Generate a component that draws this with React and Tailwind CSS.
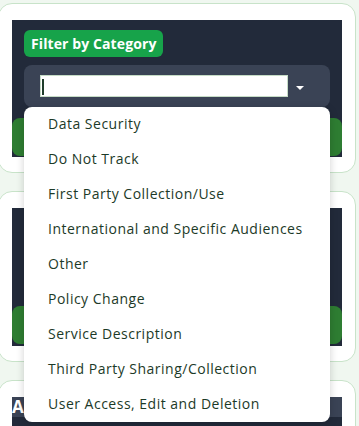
const categories = [
  "Data Security",
  "Do Not Track",
  "First Party Collection/Use",
  "International and Specific Audiences",
  "Other",
  "Policy Change",
  "Service Description",
  "Third Party Sharing/Collection",
  "User Access, Edit and Deletion",
];

function CategorySelect({ open }) {
  return (
    <div className="relative mx-3 h-[42px] rounded-lg bg-[#3a4355] pl-4 pr-[26px] pt-[10px] flex items-start">
      <div className="relative h-[22px] w-[248px] border border-[#c6dcc6] bg-white">
        {open && <span className="absolute left-[1px] top-[3px] h-[16px] w-[2px] bg-[#1f3d2b]" />}
      </div>
      <div className="ml-auto mt-[11px] h-0 w-0 border-x-[4px] border-t-[4px] border-x-transparent border-t-white" />
      {open && (
        <ul className="absolute left-0 top-full z-10 w-full rounded-lg bg-white shadow-[0_2px_8px_rgba(0,0,0,0.18)]">
          {categories.map((c) => (
            <li key={c} className="flex h-[35px] items-center pl-6 pb-[2px] text-[14px] tracking-[0.5px] text-[#1c3a28]">
              {c}
            </li>
          ))}
        </ul>
      )}
    </div>
  );
}

function FilterCard({ open, bottom }) {
  return (
    <div className="rounded-[14px] border border-[#c8e3c9] bg-white px-[13px] pt-4 pb-[15px]">
      <div className="bg-[#222a3a] pt-[10px]" style={{ paddingBottom: bottom }}>
        <div className="ml-3 inline-flex h-[27px] items-center rounded-md bg-[#17a34a] px-[7px] text-[14px] font-bold tracking-[0.1px] text-white">
          Filter by Category
        </div>
        <div className="mt-2">
          <CategorySelect open={open} />
        </div>
        <div className="mt-[11px] h-[38px] rounded-lg bg-[#2e7d32]" />
      </div>
    </div>
  );
}

export default function App() {
  return (
    <div
      className="h-[426px] w-[359px] overflow-hidden bg-[#f0f7f0]"
      style={{ fontFamily: '"Open Sans", "Liberation Sans", sans-serif' }}
    >
      <div className="ml-[-2px] mr-[3px] flex flex-col gap-[18px] pt-[3px]">
        <FilterCard open bottom={1} />
        <FilterCard open={false} bottom={2} />
        <div className="rounded-[14px] border border-[#c8e3c9] bg-white px-[13px] pt-4 h-[80px]">
          <div className="bg-[#222a3a] h-full">
            <div className="h-[20px] bg-[#3a4355] text-[17px] font-bold leading-[20px] text-white">
              Audits
            </div>
          </div>
        </div>
      </div>
    </div>
  );
}
